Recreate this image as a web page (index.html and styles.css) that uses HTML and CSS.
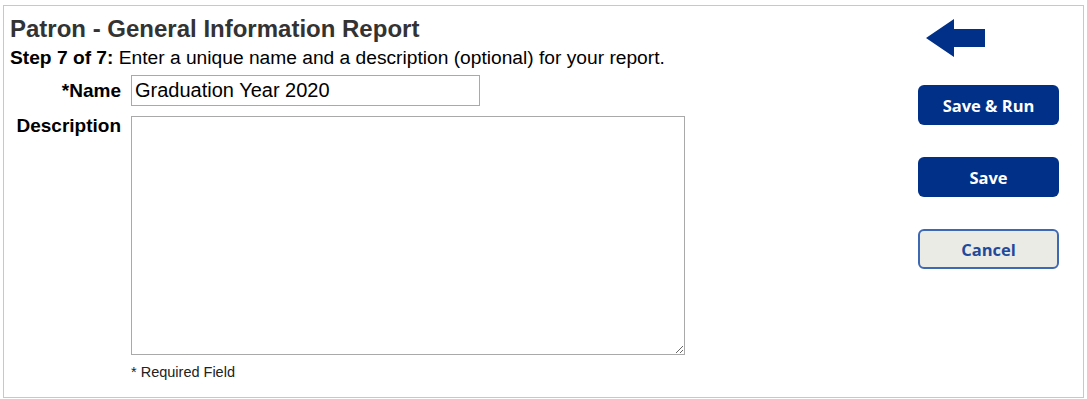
FILE: index.html
```html
<!DOCTYPE html>
<html lang="en">
<head>
  <meta charset="UTF-8" />
  <title>Patron - General Information Report</title>
  <link rel="stylesheet" href="styles.css">
</head>
<body>
  <div class="report-box">
    <!-- Left: wizard step -->
    <div class="report-main">
      <h1>Patron - General Information Report</h1>
      <p class="step"><strong>Step 7 of 7:</strong> Enter a unique name and a description (optional) for your report.</p>
      <form class="report-form">
        <label for="report-name" class="form-label">*Name</label>
        <input id="report-name" type="text" value="Graduation Year 2020">
        <label for="report-desc" class="form-label label-top">Description</label>
        <textarea id="report-desc"></textarea>
        <span></span>
        <p class="required-note">* Required Field</p>
      </form>
    </div>

    <!-- Right: actions -->
    <div class="report-actions">
      <a href="#" class="back-arrow" title="Back">
        <svg width="59" height="38" viewBox="0 0 59 38">
          <polygon points="0,19 28,0 28,10 59,10 59,28 28,28 28,38" fill="#003087"/>
        </svg>
      </a>
      <button class="action-btn">Save &amp; Run</button>
      <button class="action-btn">Save</button>
      <button class="action-btn cancel-btn">Cancel</button>
    </div>
  </div>
</body>
</html>
```

FILE: styles.css
```css
:root {
  --navy: #003087;
  --border-gray: #c8c8c8;
  --field-border: #a9a9a9;
}

* {
  box-sizing: border-box;
}

html, body {
  margin: 0;
  padding: 0;
  background-color: #fff;
  font-family: 'Liberation Sans', Arial, sans-serif;
  color: #000;
}

.report-box {
  display: flex;
  width: 1081px;
  height: 393px;
  margin: 5px 0 0 3px;
  border: 1px solid var(--border-gray);
}

.report-main {
  flex: 1;
  padding: 9px 0 0 6px;
}

h1 {
  margin: 0;
  font-size: 24px;
  line-height: 28px;
  color: #333;
}

.step {
  margin: 4px 0 0 0;
  font-size: 19.2px;
  line-height: 22px;
}

.report-form {
  display: grid;
  grid-template-columns: 111px auto;
  column-gap: 10px;
  row-gap: 10px;
  align-items: center;
  justify-items: start;
  margin-top: 6px;
}

.form-label {
  justify-self: end;
  font-weight: bold;
  font-size: 19px;
  line-height: 22px;
}

.label-top {
  align-self: start;
  margin-top: -1px;
}

input, textarea {
  font-family: 'Liberation Sans', Arial, sans-serif;
  border: 1px solid var(--field-border);
  border-radius: 0;
  margin: 0;
}

input {
  width: 349px;
  height: 31px;
  padding: 0 3px;
  font-size: 20px;
}

textarea {
  width: 554px;
  height: 239px;
  resize: both;
}

.required-note {
  margin: -1px 0 0 0;
  font-size: 14.5px;
  line-height: 17px;
  color: #222;
}

.report-actions {
  width: 141px;
  margin-right: 24px;
  padding-top: 13px;
  display: flex;
  flex-direction: column;
}

.back-arrow {
  display: block;
  margin-left: 8px;
  height: 38px;
  margin-bottom: 28px;
}

.back-arrow svg {
  display: block;
}

.action-btn {
  display: block;
  width: 141px;
  height: 40px;
  margin-bottom: 32px;
  border: none;
  border-radius: 6px;
  background-color: var(--navy);
  color: #fff;
  font-family: 'Open Sans', sans-serif;
  font-weight: bold;
  font-size: 16.5px;
  cursor: pointer;
}

.cancel-btn {
  background-color: #ebebe6;
  color: #1f4a9c;
  border: 2px solid #3d68b4;
}
```
